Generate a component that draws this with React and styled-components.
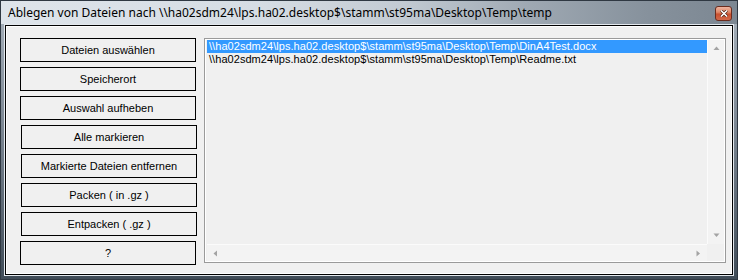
import React from 'react';
import styled, { createGlobalStyle } from 'styled-components';

const GlobalStyle = createGlobalStyle`
    html, body {
        margin: 0;
        padding: 0;
        background: #ffffff;
    }
`;

const Window = styled.div`
    width: 738px;
    height: 280px;
    box-sizing: border-box;
    display: flex;
    flex-direction: column;
    border: 1px solid #2f3842;
    background: linear-gradient(to bottom, #aab4be 0%, #7c8793 45%, #404c58 100%);
    padding: 0 3px 3px 3px;
`;

const TitleBar = styled.div`
    height: 23px;
    margin: 0 -3px;
    padding: 0 5px 0 7px;
    display: flex;
    align-items: center;
    justify-content: space-between;
    background: linear-gradient(to right, #dee4ea 0%, #d6dde4 35%, #c2cad2 55%, #9ea8b2 72%, #86919c 88%, #7c8792 100%);
`;

const Title = styled.span`
    font-family: "Segoe UI", "Noto Sans", sans-serif;
    font-size: 12px;
    color: #000;
    white-space: nowrap;
`;

const CloseButton = styled.div`
    width: 17px;
    height: 15px;
    margin-top: 1px;
    box-sizing: border-box;
    border: 1px solid #6a2c1e;
    border-radius: 3px;
    background: linear-gradient(to bottom, #efb4a0 0%, #e08868 40%, #c9502f 55%, #d2684a 100%);
    display: flex;
    align-items: center;
    justify-content: center;
`;

const Client = styled.div`
    flex: 1;
    display: flex;
    border: 1px solid #e4e9ee;
    box-shadow: inset 0 0 0 1px #000, inset 0 0 0 2px #fff;
    background: #f0f0f0;
    padding: 13px 7px 10px 15px;
    gap: 7px;
`;

const ButtonColumn = styled.div`
    display: flex;
    flex-direction: column;
    gap: 5px;
`;

const FlatButton = styled.button`
    width: 176px;
    height: 24px;
    margin: 0;
    padding: 0;
    border: 1px solid #000;
    background: #f0f0f0;
    font-family: "Liberation Sans", Arial, sans-serif;
    font-size: 11px;
    font-weight: 400;
    color: #000;
    margin-left: ${p => p.$shift || 0}px;
    cursor: default;
`;

const ListBox = styled.div`
    flex: 1;
    height: 225px;
    box-sizing: border-box;
    border: 1px solid #9a9a9a;
    box-shadow: inset 0 0 0 1px #fff;
    padding: 1px 1px 1px 2px;
    display: grid;
    grid-template-columns: 1fr 17px;
    grid-template-rows: 1fr 17px;
`;

const Items = styled.div`
    overflow: hidden;
    font-family: "Liberation Sans", Arial, sans-serif;
    font-size: 11px;
    font-weight: 400;
`;

const Item = styled.div`
    height: 13px;
    line-height: 13px;
    padding-left: 2px;
    white-space: nowrap;
    letter-spacing: 0.05px;
    color: ${p => (p.$selected ? '#fff' : '#000')};
    background: ${p => (p.$selected ? '#3399ff' : 'transparent')};
`;

const VScroll = styled.div`
    background: #f3f3f3;
    border-left: 1px solid #fbfbfb;
    display: flex;
    flex-direction: column;
    justify-content: space-between;
    align-items: center;
    padding: 6px 0;
`;

const HScroll = styled.div`
    background: #f3f3f3;
    border-top: 1px solid #fbfbfb;
    display: flex;
    justify-content: space-between;
    align-items: center;
    padding: 0 6px;
`;

const Corner = styled.div`
    background: #f0f0f0;
`;

const Arrow = ({ dir }) => {
    const paths = {
        up: 'M0.5 4 L3.5 0.5 L6.5 4 Z',
        down: 'M0.5 0.5 L3.5 4 L6.5 0.5 Z',
        left: 'M4 0.5 L0.5 3.5 L4 6.5 Z',
        right: 'M0.5 0.5 L4 3.5 L0.5 6.5 Z',
    };
    const vertical = dir === 'up' || dir === 'down';
    return (
        <svg width={vertical ? 7 : 5} height={vertical ? 5 : 7} viewBox={vertical ? '0 0 7 5' : '0 0 5 7'}>
            <path d={paths[dir]} fill="#a3a3a3" />
        </svg>
    );
};

const buttons = [
    { label: 'Dateien auswählen', shift: 0 },
    { label: 'Speicherort', shift: 0 },
    { label: 'Auswahl aufheben', shift: 0 },
    { label: 'Alle markieren', shift: 1 },
    { label: 'Markierte Dateien entfernen', shift: 1 },
    { label: 'Packen ( in .gz )', shift: 1 },
    { label: 'Entpacken ( .gz )', shift: 1 },
    { label: '?', shift: 0 },
];

const files = [
    '\\\\ha02sdm24\\lps.ha02.desktop$\\stamm\\st95ma\\Desktop\\Temp\\DinA4Test.docx',
    '\\\\ha02sdm24\\lps.ha02.desktop$\\stamm\\st95ma\\Desktop\\Temp\\Readme.txt',
];

export default function App() {
    return (
        <>
            <GlobalStyle />
            <Window>
                <TitleBar>
                    <Title>Ablegen von Dateien nach \\ha02sdm24\lps.ha02.desktop$\stamm\st95ma\Desktop\Temp\temp</Title>
                    <CloseButton>
                        <svg width="8" height="7" viewBox="0 0 8 7">
                            <path d="M1 0.5 L7 6.5 M7 0.5 L1 6.5" stroke="#4a1a10" strokeWidth="3" />
                            <path d="M1 0.5 L7 6.5 M7 0.5 L1 6.5" stroke="#fff" strokeWidth="1.6" />
                        </svg>
                    </CloseButton>
                </TitleBar>
                <Client>
                    <ButtonColumn>
                        {buttons.map(b => (
                            <FlatButton key={b.label} $shift={b.shift}>{b.label}</FlatButton>
                        ))}
                    </ButtonColumn>
                    <ListBox>
                        <Items>
                            {files.map((f, i) => (
                                <Item key={f} $selected={i === 0}>{f}</Item>
                            ))}
                        </Items>
                        <VScroll>
                            <Arrow dir="up" />
                            <Arrow dir="down" />
                        </VScroll>
                        <HScroll>
                            <Arrow dir="left" />
                            <Arrow dir="right" />
                        </HScroll>
                        <Corner />
                    </ListBox>
                </Client>
            </Window>
        </>
    );
}
